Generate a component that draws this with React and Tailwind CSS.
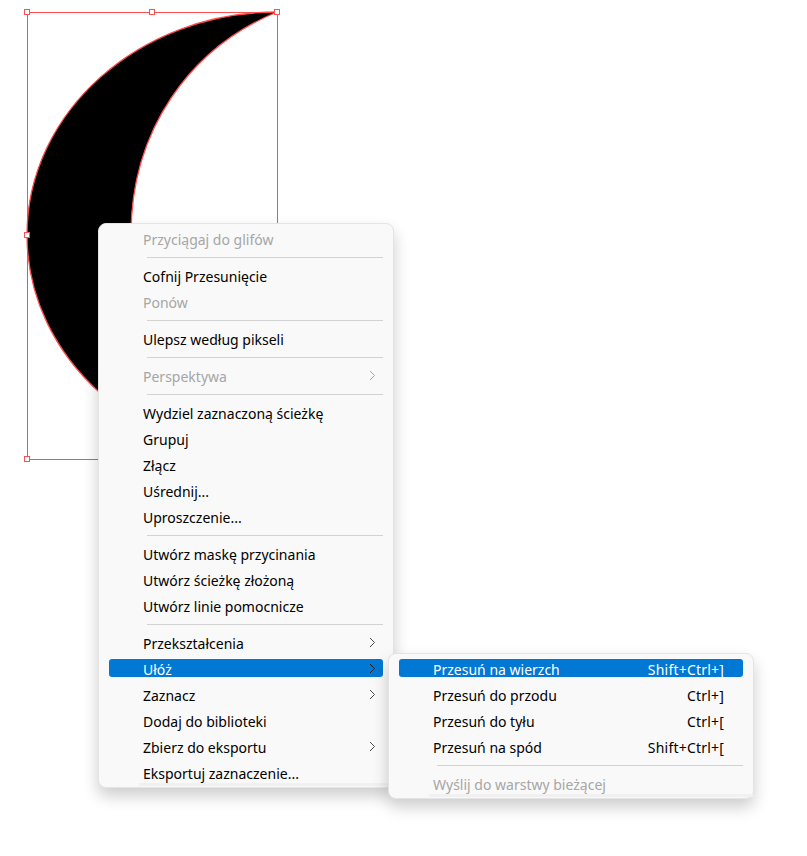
import React from "react";

const handles = [
  [27, 12], [152, 12], [277, 12],
  [27, 235], [277, 235],
  [27, 459],
];

function Chevron({ className }) {
  return (
    <svg width="7" height="11" viewBox="0 0 7 11" className={className}>
      <path d="M1 1 L5.5 5.5 L1 10" fill="none" stroke="currentColor" strokeWidth="1" />
    </svg>
  );
}

function Sep() {
  return <div className="h-[11px] flex items-center pl-[48px] pr-[10px]"><div className="h-px w-full bg-[#d2d2d2]" /></div>;
}

function Row({ label, disabled, active, arrow, shortcut }) {
  return (
    <div className={`relative h-[26px] flex items-center pl-[44px] pr-[29px] ${disabled ? "text-[#a6a6a6]" : "text-black"}`}>
      {active && <div className="absolute left-[10px] right-[10px] top-[3px] h-[18px] rounded-[3px] bg-[#0078d4]" />}
      <span className={`relative ${active ? "text-white" : ""}`}>{label}</span>
      {shortcut && <span className={`relative ml-auto tracking-[0.2px] ${active ? "text-white" : ""}`}>{shortcut}</span>}
      {arrow && (
        <Chevron className={`absolute right-[17px] top-[7px] ${active ? "text-[#1c1c1c]" : disabled ? "text-[#a6a6a6]" : "text-[#4a4a4a]"}`} />
      )}
    </div>
  );
}

export default function App() {
  return (
    <div className="relative h-[856px] w-[807px] overflow-hidden bg-white text-[14px] font-['Noto_Sans',sans-serif]">
      {/* selected shape on the canvas */}
      <svg width="807" height="856" className="absolute left-0 top-0">
        <rect x="27.5" y="12.5" width="250" height="447" fill="none" stroke="#fb5050" strokeWidth="1" />
        <path
          d="M277 12 C139 12 27 112 27 235 C27 358 139 459 277 459 C190 423 131 340 131 235 C131 130 190 48 277 12 Z"
          fill="#000"
          stroke="#ff4d4d"
          strokeWidth="1.3"
        />
        {handles.map(([x, y]) => (
          <rect key={x + "-" + y} x={x - 2.5} y={y - 2.5} width="5" height="5" fill="#fff" stroke="#fb5050" strokeWidth="1" />
        ))}
      </svg>

      {/* context menu */}
      <div className="absolute left-[98px] top-[223px] w-[296px] h-[565px] rounded-[8px] border border-[#e4e4e4] bg-[#f9f9f9] pt-[2px] shadow-[0_8px_16px_rgba(0,0,0,0.2)]">
        <Row label="Przyciągaj do glifów" disabled />
        <Sep />
        <Row label="Cofnij Przesunięcie" />
        <Row label="Ponów" disabled />
        <Sep />
        <Row label="Ulepsz według pikseli" />
        <Sep />
        <Row label="Perspektywa" disabled arrow />
        <Sep />
        <Row label="Wydziel zaznaczoną ścieżkę" />
        <Row label="Grupuj" />
        <Row label="Złącz" />
        <Row label="Uśrednij..." />
        <Row label="Uproszczenie..." />
        <Sep />
        <Row label="Utwórz maskę przycinania" />
        <Row label="Utwórz ścieżkę złożoną" />
        <Row label="Utwórz linie pomocnicze" />
        <Sep />
        <Row label="Przekształcenia" arrow />
        <Row label="Ułóż" active arrow />
        <Row label="Zaznacz" arrow />
        <Row label="Dodaj do biblioteki" />
        <Row label="Zbierz do eksportu" arrow />
        <Row label="Eksportuj zaznaczenie..." />
        <div className="absolute left-[40px] right-0 bottom-[1px] h-[3px] bg-[#f1f1f1]" />
      </div>

      {/* submenu */}
      <div className="absolute left-[388px] top-[653px] w-[366px] h-[146px] rounded-[8px] border border-[#e4e4e4] bg-[#f9f9f9] pt-[2px] shadow-[0_8px_16px_rgba(0,0,0,0.2)]">
        <Row label="Przesuń na wierzch" shortcut="Shift+Ctrl+]" active />
        <Row label="Przesuń do przodu" shortcut="Ctrl+]" />
        <Row label="Przesuń do tyłu" shortcut="Ctrl+[" />
        <Row label="Przesuń na spód" shortcut="Shift+Ctrl+[" />
        <Sep />
        <Row label="Wyślij do warstwy bieżącej" disabled />
        <div className="absolute left-[40px] right-0 bottom-[1px] h-[3px] bg-[#f1f1f1]" />
      </div>
    </div>
  );
}
